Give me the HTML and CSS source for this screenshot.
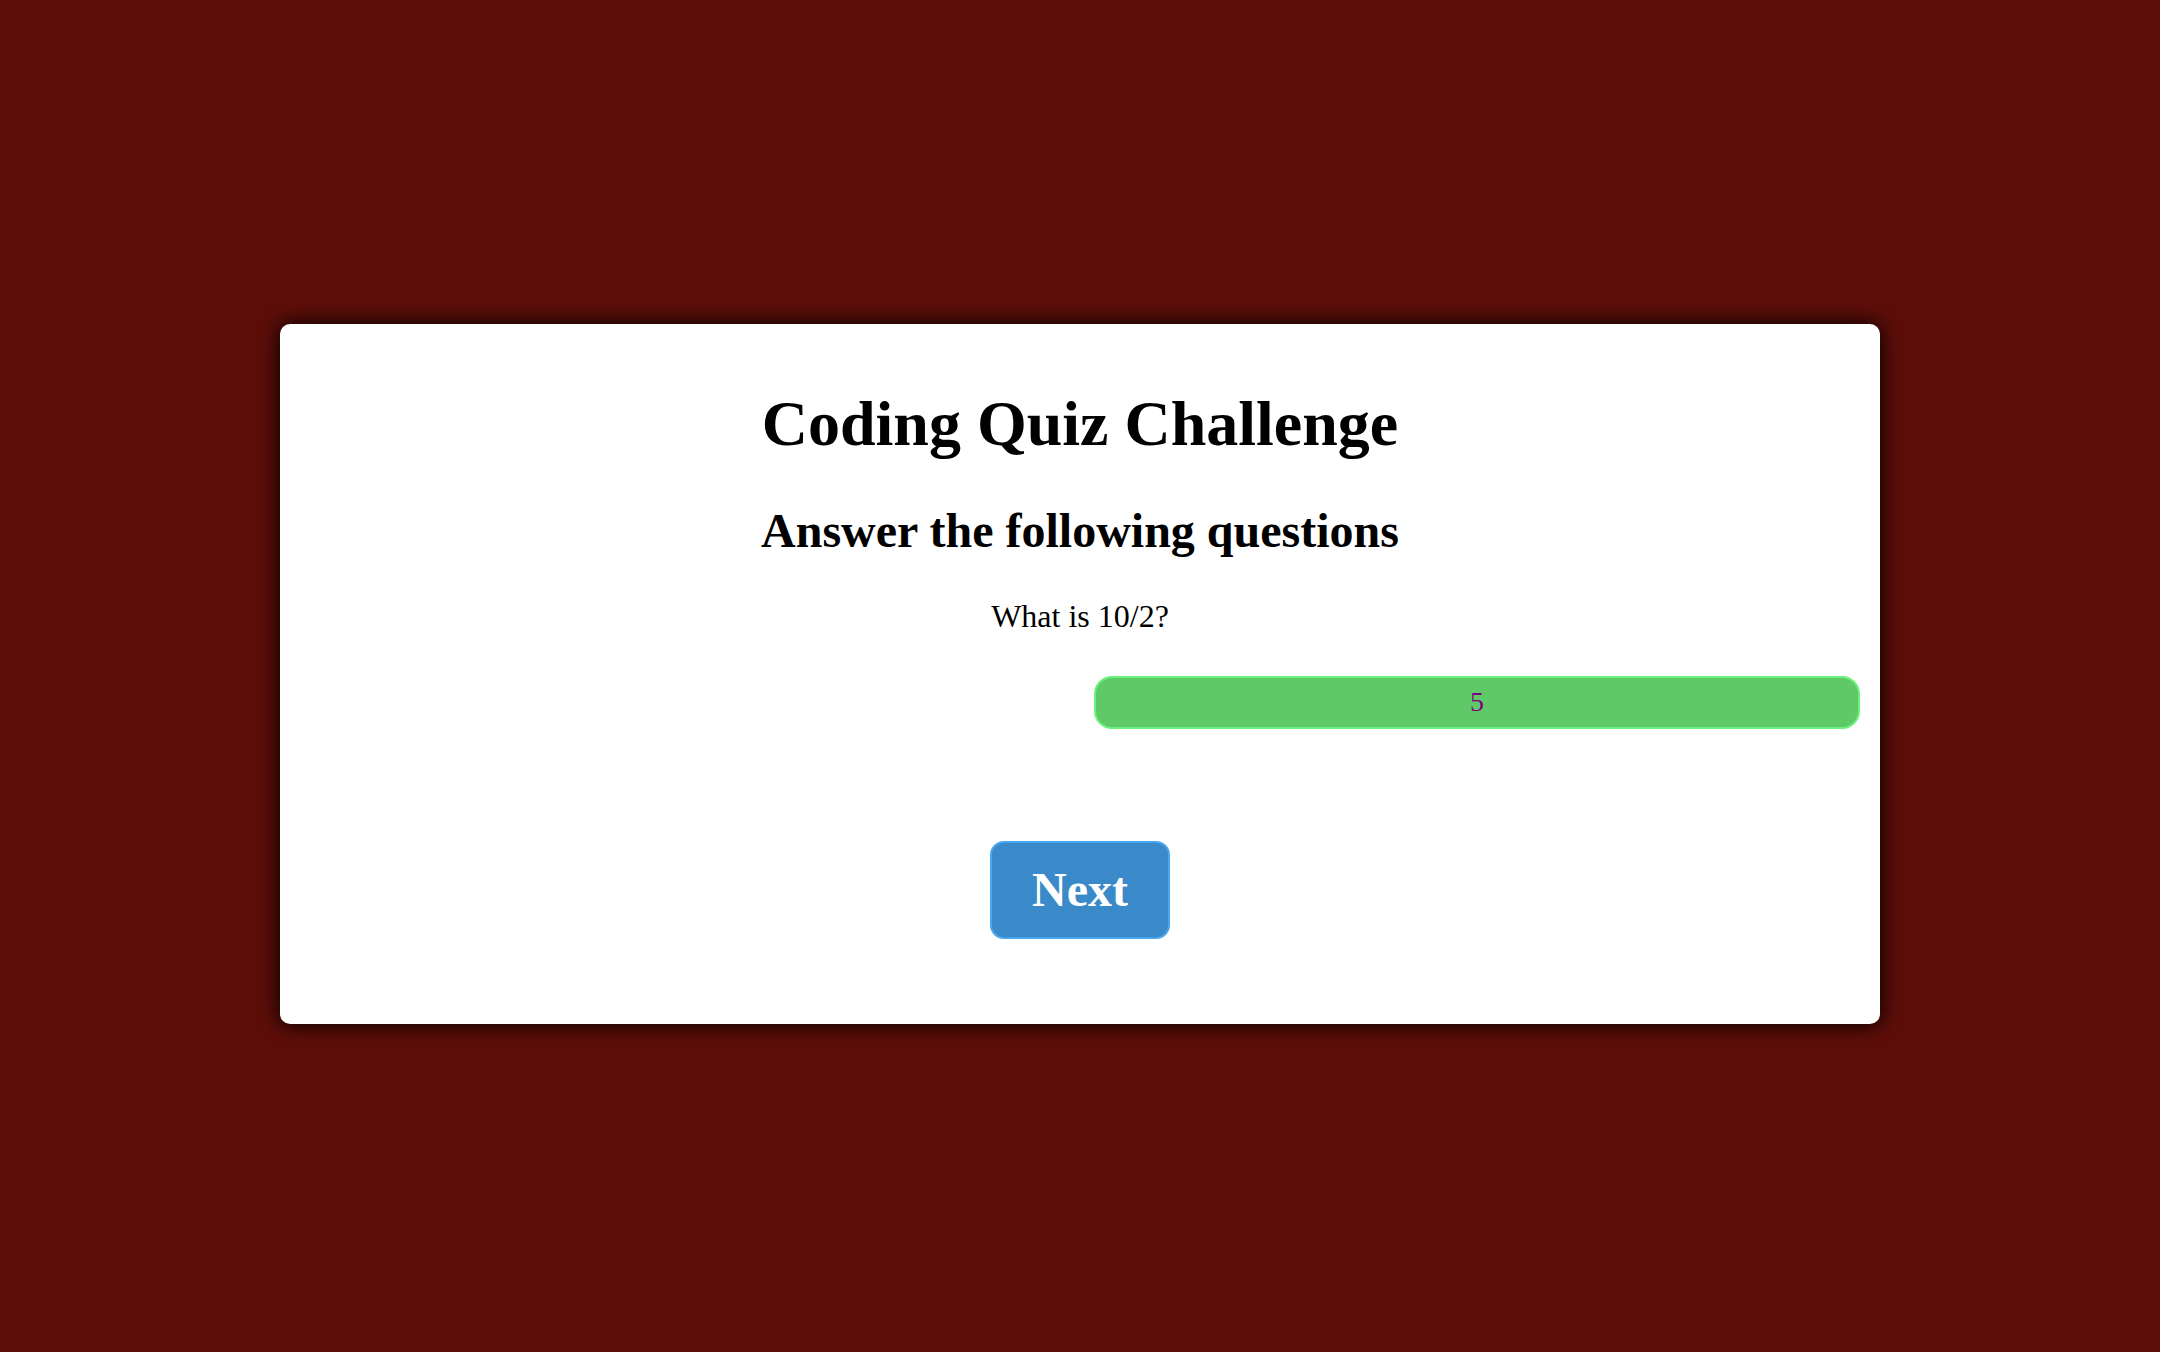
FILE: index.html
```html
<!DOCTYPE html>
<html lang="en">
<head>
<meta charset="utf-8">
<title>Coding Quiz Challenge</title>
<link rel="stylesheet" href="styles.css">
</head>
<body>
  <main class="card">
    <h1 class="title">Coding Quiz Challenge</h1>
    <h2 class="subtitle">Answer the following questions</h2>
    <p class="question">What is 10/2?</p>
    <div class="answers">
      <button class="answer" type="button">5</button>
    </div>
    <div class="actions">
      <button class="next" type="button">Next</button>
    </div>
  </main>
</body>
</html>
```

FILE: styles.css
```css
html, body {
  margin: 0;
  padding: 0;
}

body {
  background: #5e0e09;
  font-family: "Liberation Serif", "Times New Roman", serif;
  min-height: 1352px;
  padding-top: 324px;
  box-sizing: border-box;
}

.card {
  width: 1600px;
  height: 700px;
  box-sizing: border-box;
  margin: 0 auto;
  background: #ffffff;
  border-radius: 10px;
  box-shadow: 0 0 20px 2px rgba(0, 0, 0, 0.9);
  padding: 20px;
  display: flex;
  flex-direction: column;
  text-align: center;
  color: #000;
}

.title {
  font-size: 64px;
  font-weight: bold;
  line-height: 73.6px;
  margin: 42.6px 0 0;
}

.subtitle {
  font-size: 48px;
  font-weight: bold;
  line-height: 55.2px;
  margin: 43px 0 0;
}

.question {
  font-size: 32px;
  line-height: 36.8px;
  margin: 39.6px 0 0;
}

.answers {
  display: flex;
  justify-content: flex-end;
  margin-top: 41px;
}

.answer {
  width: 766px;
  height: 53px;
  box-sizing: border-box;
  background: #5ec966;
  border: 2px solid #6cf27c;
  border-radius: 18px;
  font-family: "Liberation Serif", "Times New Roman", serif;
  font-size: 28px;
  color: #800080;
  padding: 0;
  cursor: pointer;
}

.actions {
  display: flex;
  justify-content: center;
  margin-top: 112px;
}

.next {
  width: 180px;
  height: 98px;
  box-sizing: border-box;
  background: #3a89c8;
  border: 2px solid #4ba6f0;
  border-radius: 14px;
  color: #ffffff;
  font-family: "Liberation Serif", "Times New Roman", serif;
  font-size: 48px;
  font-weight: bold;
  padding: 0;
  cursor: pointer;
}
```
